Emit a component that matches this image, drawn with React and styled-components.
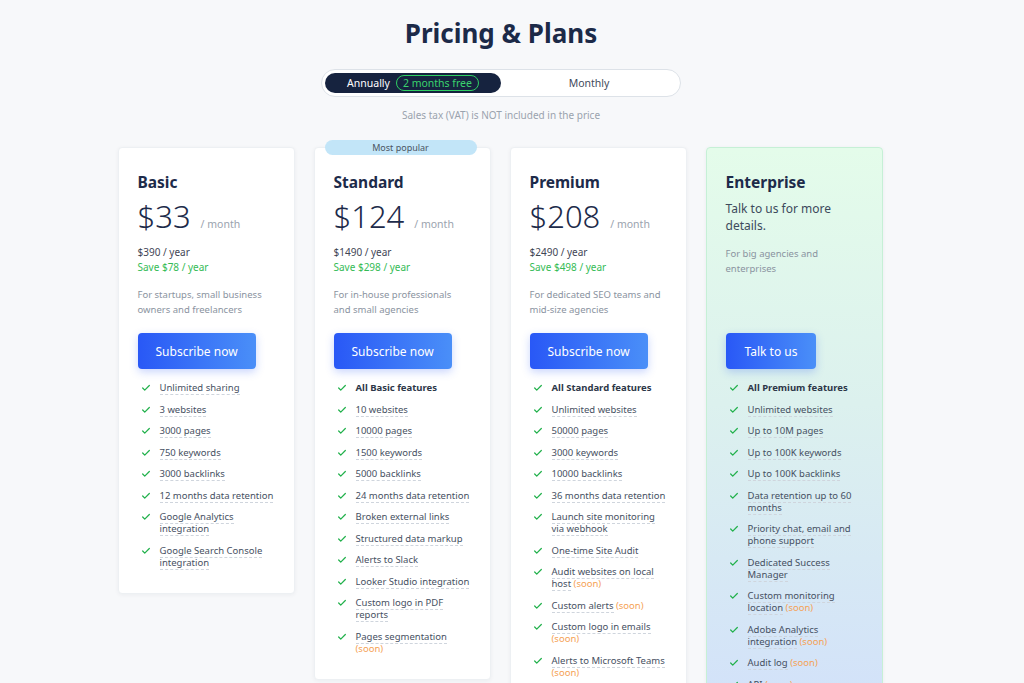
import React from 'react';
import styled, { createGlobalStyle } from 'styled-components';
import { Check } from 'lucide-react';

const GlobalStyle = createGlobalStyle`
  * { box-sizing: border-box; }
  body {
    margin: 0;
    background: #f7f8fa;
    font-family: "Noto Sans", "Open Sans", sans-serif;
    color: #1d2b4a;
  }
`;

const plans = [
  {
    name: 'Basic',
    price: '$33',
    year: '$390 / year',
    save: 'Save $78 / year',
    desc: 'For startups, small business owners and freelancers',
    cta: 'Subscribe now',
    features: [
      ['Unlimited sharing'],
      ['3 websites'],
      ['3000 pages'],
      ['750 keywords'],
      ['3000 backlinks'],
      ['12 months data retention'],
      ['Google Analytics integration'],
      ['Google Search Console integration'],
    ],
  },
  {
    name: 'Standard',
    popular: true,
    price: '$124',
    year: '$1490 / year',
    save: 'Save $298 / year',
    desc: 'For in-house professionals and small agencies',
    cta: 'Subscribe now',
    features: [
      ['All Basic features', false, true],
      ['10 websites'],
      ['10000 pages'],
      ['1500 keywords'],
      ['5000 backlinks'],
      ['24 months data retention'],
      ['Broken external links'],
      ['Structured data markup'],
      ['Alerts to Slack'],
      ['Looker Studio integration'],
      ['Custom logo in PDF reports'],
      ['Pages segmentation', true],
    ],
  },
  {
    name: 'Premium',
    price: '$208',
    year: '$2490 / year',
    save: 'Save $498 / year',
    desc: 'For dedicated SEO teams and mid-size agencies',
    cta: 'Subscribe now',
    features: [
      ['All Standard features', false, true],
      ['Unlimited websites'],
      ['50000 pages'],
      ['3000 keywords'],
      ['10000 backlinks'],
      ['36 months data retention'],
      ['Launch site monitoring via webhook'],
      ['One-time Site Audit'],
      ['Audit websites on local host', true],
      ['Custom alerts', true],
      ['Custom logo in emails', true],
      ['Alerts to Microsoft Teams', true],
    ],
  },
  {
    name: 'Enterprise',
    enterprise: true,
    lead: 'Talk to us for more details.',
    desc: 'For big agencies and enterprises',
    cta: 'Talk to us',
    features: [
      ['All Premium features', false, true],
      ['Unlimited websites'],
      ['Up to 10M pages'],
      ['Up to 100K keywords'],
      ['Up to 100K backlinks'],
      ['Data retention up to 60 months'],
      ['Priority chat, email and phone support'],
      ['Dedicated Success Manager'],
      ['Custom monitoring location', true],
      ['Adobe Analytics integration', true],
      ['Audit log', true],
      ['API', true],
    ],
  },
];

const Page = styled.div`
  width: 1002px;
  padding-top: 16px;
`;

const Title = styled.h1`
  margin: 0;
  text-align: center;
  font-size: 26px;
  line-height: 34px;
  font-weight: 700;
  color: #1c2a48;
`;

const Toggle = styled.div`
  width: 360px;
  height: 28px;
  margin: 19px auto 0;
  padding: 3px;
  display: grid;
  grid-template-columns: 176px 1fr;
  background: #fff;
  border: 1px solid #dde2e8;
  border-radius: 14px;
`;

const ToggleOption = styled.div`
  display: flex;
  align-items: center;
  justify-content: center;
  gap: 6px;
  border-radius: 10px;
  font-size: 10.5px;
  background: ${(p) => (p.$active ? '#16233f' : 'transparent')};
  color: ${(p) => (p.$active ? '#ffffff' : '#3f4a5c')};
`;

const FreeBadge = styled.span`
  border: 1px solid #2fcf62;
  color: #3ad36d;
  border-radius: 9px;
  padding: 0 6px;
  line-height: 14px;
  font-size: 10.5px;
`;

const TaxNote = styled.p`
  margin: 11px 0 0;
  text-align: center;
  font-size: 10px;
  line-height: 14px;
  color: #9aa3ae;
`;

const Cards = styled.div`
  display: flex;
  justify-content: center;
  align-items: flex-start;
  gap: 19px;
  margin-top: 25px;
  padding-right: 2px;
`;

const Card = styled.div`
  position: relative;
  width: 177px;
  flex-shrink: 0;
  padding: 24px 19px 24px;
  border-radius: 4px;
  background: ${(p) =>
    p.$enterprise
      ? 'linear-gradient(180deg, #e4fcea 0%, #dcf1ee 45%, #d2e1fa 100%)'
      : '#ffffff'};
  border: 1px solid ${(p) => (p.$enterprise ? '#c6f0d6' : '#edf0f3')};
  box-shadow: 0 1px 4px rgba(20, 30, 60, 0.05);
`;

const PopularTag = styled.div`
  position: absolute;
  top: -8px;
  left: 10px;
  width: 152px;
  height: 15px;
  border-radius: 8px;
  background: #c2e5f8;
  color: #4b5563;
  font-size: 9px;
  line-height: 15px;
  text-align: center;
`;

const Head = styled.div`
  height: 161px;
  display: flex;
  flex-direction: column;
`;

const PlanName = styled.h2`
  margin: 0;
  font-size: 15.5px;
  line-height: 20px;
  font-weight: 700;
  color: #1d2b4a;
`;

const PriceRow = styled.div`
  display: flex;
  align-items: baseline;
  height: 48px;
  line-height: 48px;
`;

const Amount = styled.span`
  font-size: 31px;
  font-weight: 300;
  color: #1d2b4a;
`;

const Per = styled.span`
  margin-left: 10px;
  font-size: 10.5px;
  color: #9aa3ae;
`;

const YearLine = styled.div`
  margin-top: ${(p) => (p.$first ? '5px' : '0')};
  font-size: 10px;
  line-height: 15px;
  color: ${(p) => (p.$save ? '#34bb55' : '#3f4656')};
`;

const Lead = styled.p`
  margin: 8px 0 0;
  font-size: 12px;
  line-height: 17px;
  color: #3d4a5c;
`;

const Desc = styled.p`
  margin: 12px 0 0;
  font-size: 9.5px;
  line-height: 15px;
  color: #8a93a0;
`;

const CtaButton = styled.button`
  align-self: flex-start;
  height: 36px;
  padding: 0 ${(p) => (p.$narrow ? '19px' : '18px')};
  border: 0;
  border-radius: 4px;
  background: linear-gradient(90deg, #2958f6 0%, #4a8ff8 100%);
  box-shadow: 0 3px 8px rgba(41, 88, 246, 0.25);
  color: #fff;
  font-family: inherit;
  font-size: 12px;
  cursor: pointer;
`;

const FeatureList = styled.ul`
  list-style: none;
  margin: 13px 0 0;
  padding: 0 0 0 3px;
  display: flex;
  flex-direction: column;
  gap: 9.5px;
`;

const Feature = styled.li`
  display: flex;
  align-items: flex-start;
  gap: 9px;
  font-size: 9.5px;
  line-height: 12px;
  color: #465062;
  svg {
    flex-shrink: 0;
    margin-top: 1px;
    color: #22b14c;
  }
`;

const FeatureText = styled.span`
  font-weight: ${(p) => (p.$bold ? 700 : 400)};
  color: ${(p) => (p.$bold ? '#2d3748' : '#465062')};
  span.label {
    border-bottom: ${(p) => (p.$bold ? 'none' : '1px dashed #cfd5dd')};
  }
`;

const Soon = styled.span`
  color: #f5a255;
`;

const PlanCard = ({ plan }) => (
  <Card $enterprise={plan.enterprise}>
    {plan.popular && <PopularTag>Most popular</PopularTag>}
    <Head>
      <PlanName>{plan.name}</PlanName>
      {plan.enterprise ? (
        <>
          <Lead>{plan.lead}</Lead>
          <Desc>{plan.desc}</Desc>
        </>
      ) : (
        <>
          <PriceRow>
            <Amount>{plan.price}</Amount>
            <Per>/ month</Per>
          </PriceRow>
          <YearLine $first>{plan.year}</YearLine>
          <YearLine $save>{plan.save}</YearLine>
          <Desc>{plan.desc}</Desc>
        </>
      )}
    </Head>
    <CtaButton $narrow={plan.enterprise}>{plan.cta}</CtaButton>
    <FeatureList>
      {plan.features.map(([label, soon, bold]) => (
        <Feature key={label}>
          <Check size={10} strokeWidth={3} />
          <FeatureText $bold={bold}>
            <span className="label">{label}</span>
            {soon && <Soon> (soon)</Soon>}
          </FeatureText>
        </Feature>
      ))}
    </FeatureList>
  </Card>
);

export default function App() {
  return (
    <>
      <GlobalStyle />
      <Page>
        <Title>Pricing &amp; Plans</Title>
        <Toggle>
          <ToggleOption $active>
            Annually <FreeBadge>2 months free</FreeBadge>
          </ToggleOption>
          <ToggleOption>Monthly</ToggleOption>
        </Toggle>
        <TaxNote>Sales tax (VAT) is NOT included in the price</TaxNote>
        <Cards>
          {plans.map((plan) => (
            <PlanCard key={plan.name} plan={plan} />
          ))}
        </Cards>
      </Page>
    </>
  );
}
